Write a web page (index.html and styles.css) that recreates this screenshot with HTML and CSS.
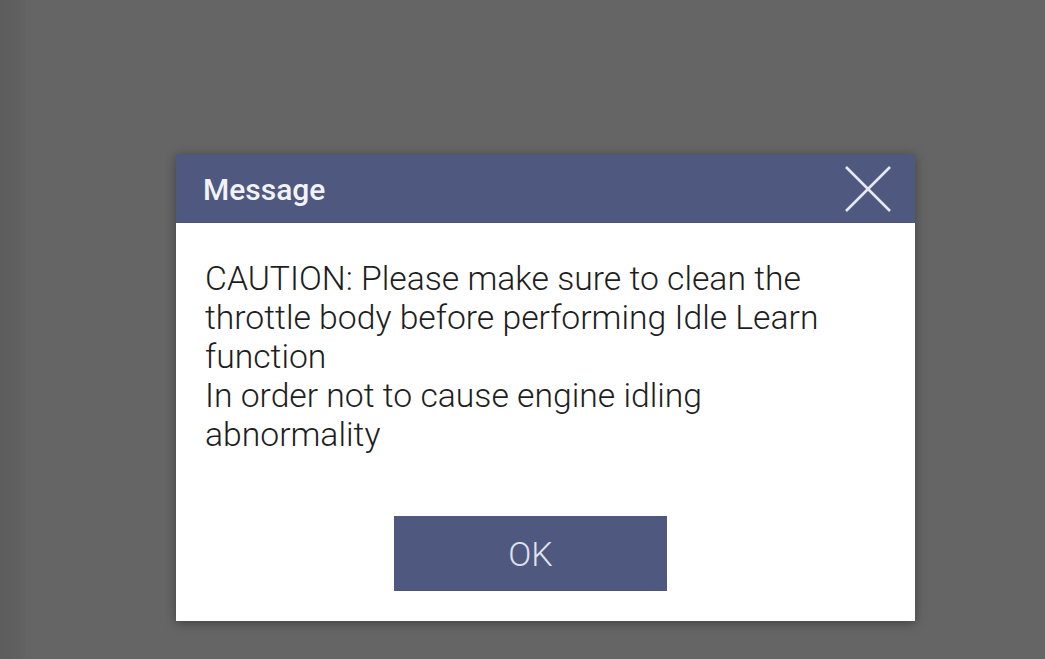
FILE: index.html
```html
<!DOCTYPE html>
<html lang="en">
<head>
    <meta charset="UTF-8">
    <meta name="viewport" content="width=device-width, initial-scale=1.0">
    <title>Message</title>
    <link rel="stylesheet" href="styles.css">
</head>
<body>
    <div class="screen">
        <div class="edge"></div>
        <div class="stage">
            <div class="dialog">
                <div class="dialog-head">
                    <h2>Message</h2>
                    <button class="close" aria-label="Close">
                        <svg width="50" height="50" viewBox="0 0 50 50">
                            <path d="M3 3 L47 47 M47 3 L3 47" stroke="#e6e8f2" stroke-width="2.6" fill="none"/>
                        </svg>
                    </button>
                </div>
                <div class="dialog-body">
                    <p>CAUTION: Please make sure to clean the throttle body before performing Idle Learn function<br>In order not to cause engine idling abnormality</p>
                    <div class="actions">
                        <button class="ok">OK</button>
                    </div>
                </div>
            </div>
        </div>
    </div>
</body>
</html>
```

FILE: styles.css
```css
html, body { margin: 0; height: 100%; }
body { background: #656565; font-family: Roboto, "Liberation Sans", sans-serif; overflow: hidden; }
.screen { display: flex; height: 659px; }
.edge { width: 25px; background: linear-gradient(to right, #5d5d5d, #606060 70%, #636363); }
.stage { flex: 1; padding: 154px 0 0 151px; }
.dialog { width: 739px; background: #fff; box-shadow: 0 2px 10px rgba(0, 0, 0, 0.35); }
.dialog-head { height: 69px; background: #4f587e; display: flex; align-items: center; justify-content: space-between; padding: 0 22px 0 27px; }
.dialog-head h2 { margin: 0; color: #f2f3f8; font-size: 30px; font-weight: 500; padding-top: 2px; }
.close { background: none; border: 0; padding: 0; width: 50px; height: 50px; }
.dialog-body { padding: 36px 29px 30px 29px; }
.dialog-body p { margin: 0; max-width: 670px; font-size: 33.7px; line-height: 39px; color: #1e1e1e; font-weight: 300; }
.actions { display: flex; justify-content: center; margin-top: 62px; padding-right: 30px; }
.ok { width: 273px; height: 75px; background: #4f587e; border: 0; color: #dfe2ee; font-family: Roboto, sans-serif; font-size: 34px; font-weight: 300; }
```
